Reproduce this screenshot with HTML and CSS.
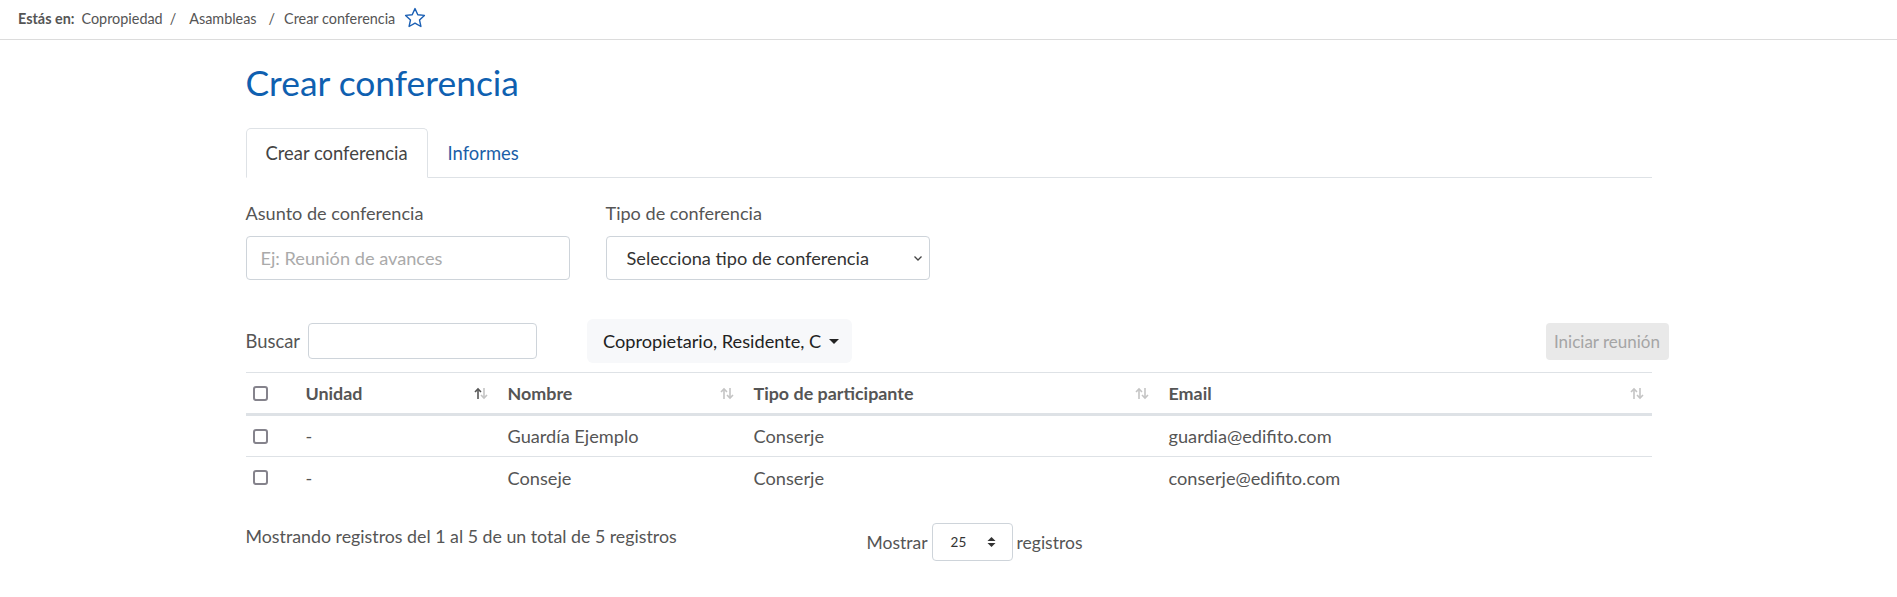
FILE: index.html
```html
<!DOCTYPE html>
<html lang="es">
<head>
    <meta charset="UTF-8">
    <meta name="viewport" content="width=device-width, initial-scale=1.0">
    <title>Crear conferencia</title>
    <link rel="stylesheet" href="styles.css">
</head>
<body>
    <!-- Migas de pan -->
    <div class="breadcrumb-bar">
        <span class="crumb-label">Estás en:</span>
        <a class="crumb" href="#">Copropiedad</a>
        <span class="crumb-sep">/</span>
        <a class="crumb crumb-wide" href="#">Asambleas</a>
        <span class="crumb-sep last">/</span>
        <span class="crumb">Crear conferencia</span>
        <svg class="fav-star" width="24" height="24" viewBox="0 0 24 24">
            <polygon points="12,2.6 14.8,8.7 21.4,9.4 16.5,13.9 17.9,20.5 12,17.1 6.1,20.5 7.5,13.9 2.6,9.4 9.2,8.7" fill="none" stroke="#1a5fb4" stroke-width="1.4" stroke-linejoin="round"/>
        </svg>
    </div>

    <div class="container">
        <h1 class="page-title">Crear conferencia</h1>

        <ul class="tabs">
            <li class="tab active">Crear conferencia</li>
            <li class="tab"><a href="#">Informes</a></li>
        </ul>

        <div class="form-row">
            <div class="field">
                <label for="asunto">Asunto de conferencia</label>
                <input type="text" id="asunto" class="form-input" placeholder="Ej: Reunión de avances">
            </div>
            <div class="field">
                <label>Tipo de conferencia</label>
                <div class="form-select">
                    <span>Selecciona tipo de conferencia</span>
                    <svg width="12" height="12" viewBox="0 0 12 12"><polyline points="2.5,4.5 6,8 9.5,4.5" fill="none" stroke="#444" stroke-width="1.3"/></svg>
                </div>
            </div>
        </div>

        <div class="toolbar">
            <label class="search">Buscar <input type="text"></label>
            <button class="filter-btn">Copropietario, Residente, C <span class="caret"></span></button>
            <button class="start-btn" disabled>Iniciar reunión</button>
        </div>

        <table class="participants">
            <thead>
                <tr>
                    <th class="col-check"><span class="checkbox"></span></th>
                    <th class="col-unidad sortable">Unidad <span class="sort asc"></span></th>
                    <th class="col-nombre sortable">Nombre <span class="sort"></span></th>
                    <th class="col-tipo sortable">Tipo de participante <span class="sort"></span></th>
                    <th class="col-email sortable">Email <span class="sort"></span></th>
                </tr>
            </thead>
            <tbody id="rows"></tbody>
        </table>

        <div class="table-footer">
            <div class="info">Mostrando registros del 1 al 5 de un total de 5 registros</div>
            <div class="length">
                Mostrar
                <div class="length-select">
                    <span>25</span>
                    <svg width="9" height="12" viewBox="0 0 9 12"><polygon points="0.5,5 4.5,1 8.5,5" fill="#333"/><polygon points="0.5,7 4.5,11 8.5,7" fill="#333"/></svg>
                </div>
                registros
            </div>
        </div>
    </div>

    <script>
        const participants = [
            { unidad: '-', nombre: 'Guardía Ejemplo', tipo: 'Conserje', email: 'guardia@edifito.com' },
            { unidad: '-', nombre: 'Conseje', tipo: 'Conserje', email: 'conserje@edifito.com' }
        ];

        const sortIcon = '<svg width="14" height="13" viewBox="0 0 14 13">' +
            '<g class="up"><line x1="4" y1="2" x2="4" y2="12"/><polyline points="1,5 4,2 7,5"/></g>' +
            '<g class="down"><line x1="10" y1="1" x2="10" y2="11"/><polyline points="7,8 10,11 13,8"/></g>' +
            '</svg>';

        document.querySelectorAll('.sort').forEach(function(el) {
            el.innerHTML = sortIcon;
        });

        const tbody = document.getElementById('rows');
        participants.forEach(function(p) {
            const tr = document.createElement('tr');
            tr.innerHTML = '<td class="col-check"><span class="checkbox"></span></td>' +
                `<td>${p.unidad}</td><td>${p.nombre}</td><td>${p.tipo}</td><td>${p.email}</td>`;
            tbody.appendChild(tr);
        });
    </script>
</body>
</html>
```

FILE: styles.css
```css
body {
    margin: 0;
    font-family: Lato, "Noto Sans", sans-serif;
    color: #555;
    background-color: #fff;
}

a {
    text-decoration: none;
}

/* migas de pan */
.breadcrumb-bar {
    display: flex;
    align-items: center;
    height: 40px;
    padding: 0 0 3px 18px;
    box-sizing: border-box;
    border-bottom: 1px solid #dcdcdc;
    font-size: 14.4px;
    color: #555;
}

.crumb-label {
    font-weight: bold;
    margin-right: 7px;
}

.crumb {
    color: #555;
}

.crumb-wide {
    margin-right: 5px;
}

.crumb-sep {
    margin: 0 13px 0 7px;
}

.crumb-sep.last {
    margin-right: 9px;
}

.fav-star {
    margin-left: 8px;
}

/* contenido */
.container {
    width: 1406px;
    margin: 0 auto;
}

.page-title {
    margin: 24px 0 26px;
    font-size: 35.4px;
    line-height: 38px;
    font-weight: normal;
    color: #0f60b0;
}

.tabs {
    display: flex;
    margin: 0;
    padding: 0;
    list-style: none;
    height: 49px;
    border-bottom: 1px solid #dee2e6;
}

.tab {
    height: 50px;
    box-sizing: border-box;
    padding: 0 19px;
    display: flex;
    align-items: center;
    font-size: 18.4px;
    color: #444;
    border: 1px solid transparent;
    border-radius: 5px 5px 0 0;
}

.tab.active {
    border-color: #dee2e6 #dee2e6 #fff;
    background-color: #fff;
}

.tab a {
    color: #1b5fa8;
}

.form-row {
    display: flex;
    gap: 36px;
    margin-top: 22px;
}

.field {
    display: flex;
    flex-direction: column;
    width: 324px;
}

.field label {
    font-size: 18.1px;
    line-height: 27px;
    margin-bottom: 9px;
}

.form-input {
    height: 44px;
    box-sizing: border-box;
    border: 1px solid #ced4da;
    border-radius: 4px;
    padding: 0 14px;
    font-family: inherit;
    font-size: 18.2px;
    color: #444;
    outline: none;
}

.form-input::placeholder {
    color: #aaa;
}

.form-select {
    height: 44px;
    box-sizing: border-box;
    border: 1px solid #ced4da;
    border-radius: 4px;
    padding: 0 5px 0 20px;
    display: flex;
    align-items: center;
    justify-content: space-between;
    font-size: 18.2px;
    color: #333;
}

/* barra de busqueda */
.toolbar {
    display: flex;
    align-items: center;
    height: 44px;
    margin-top: 39px;
    margin-right: -17px;
}

.search {
    display: flex;
    align-items: center;
    font-size: 18.4px;
}

.search input {
    width: 229px;
    height: 36px;
    box-sizing: border-box;
    margin-left: 8px;
    border: 1px solid #ced4da;
    border-radius: 4px;
    outline: none;
}

.filter-btn {
    margin-left: 50px;
    height: 44px;
    width: 265px;
    padding: 0 0 0 16px;
    display: flex;
    align-items: center;
    border: none;
    border-radius: 6px;
    background-color: #f7f8fa;
    font-family: inherit;
    font-size: 18.2px;
    color: #222;
}

.caret {
    margin-left: 8px;
    border-left: 5px solid transparent;
    border-right: 5px solid transparent;
    border-top: 5px solid #222;
}

.start-btn {
    margin-left: auto;
    height: 37px;
    width: 123px;
    padding: 0;
    border: none;
    border-radius: 4px;
    background-color: #e9e9e9;
    font-family: inherit;
    font-size: 17px;
    color: #a5a5a5;
}

/* tabla */
.participants {
    width: 100%;
    margin-top: 9px;
    border-collapse: collapse;
    font-size: 18.2px;
}

.participants th,
.participants td {
    padding: 0 12px;
    text-align: left;
}

.participants th {
    height: 40px;
    font-size: 17.9px;
    font-weight: bold;
    color: #555;
    border-top: 1px solid #dee2e6;
    border-bottom: 3px solid #dee2e6;
}

.participants td {
    height: 40px;
    color: #555;
    border-bottom: 1px solid #dee2e6;
}

.participants tbody tr:last-child td {
    border-bottom: none;
    height: 41px;
}

.participants .col-check {
    width: 41px;
    padding: 0 0 0 7px;
}

.col-unidad { width: 178px; }
.col-nombre { width: 222px; }
.col-tipo { width: 391px; }

.sortable {
    position: relative;
}

.sort {
    position: absolute;
    right: 8px;
    top: 14px;
    line-height: 0;
}

.sort svg {
    fill: none;
    stroke: #c4c4c4;
    stroke-width: 1.6;
}

.sort.asc .up {
    stroke: #555;
}

.checkbox {
    display: block;
    width: 15px;
    height: 15px;
    box-sizing: border-box;
    border: 2px solid #85838c;
    border-radius: 3px;
    background-color: #fff;
}

/* pie de tabla */
.table-footer {
    display: grid;
    grid-template-columns: 623px 1fr;
    margin-top: 25px;
    font-size: 17.8px;
}

.info {
    line-height: 26px;
}

.length {
    display: flex;
    align-items: center;
    gap: 4px;
    margin-left: -2px;
    font-size: 17.5px;
}

.length-select {
    width: 81px;
    height: 38px;
    box-sizing: border-box;
    border: 1px solid #ced4da;
    border-radius: 4px;
    display: flex;
    align-items: center;
    justify-content: space-between;
    padding: 0 16px 0 18px;
    font-size: 13.5px;
    color: #333;
}
```
